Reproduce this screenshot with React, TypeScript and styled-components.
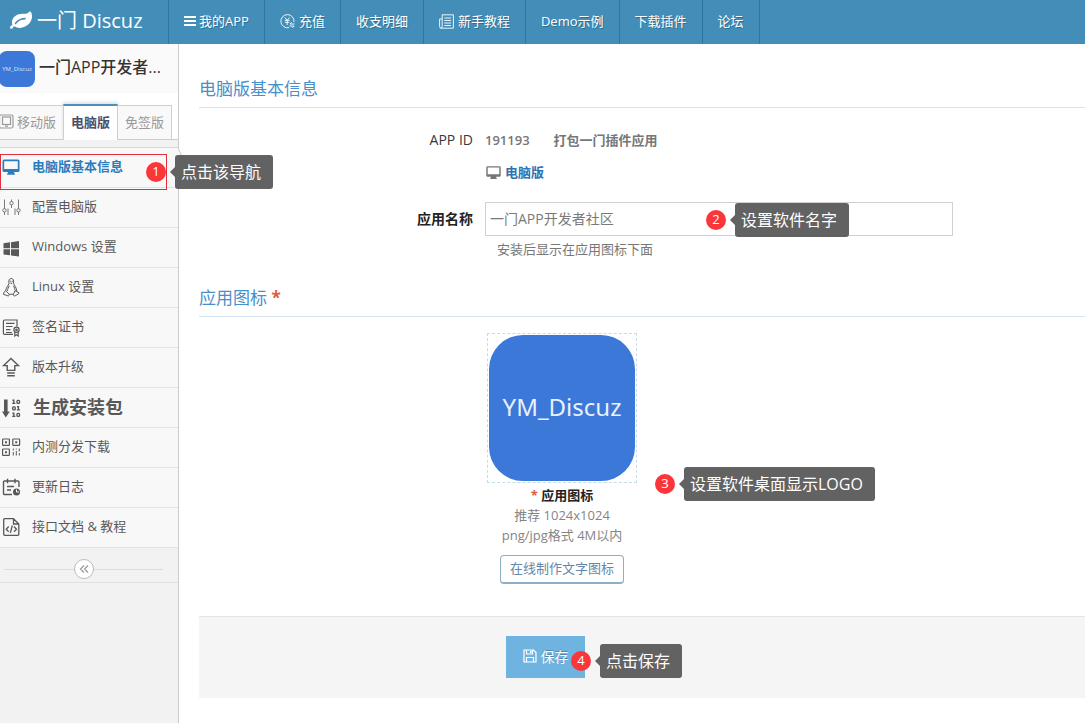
import React from "react";
import styled, { createGlobalStyle, css } from "styled-components";

const GlobalStyle = createGlobalStyle`
  *, *::before, *::after { box-sizing: border-box; }
  body {
    margin: 0;
    background: #fff;
    color: #393939;
    font: 13px/20px "Open Sans", "Noto Sans CJK SC", sans-serif;
  }
  a { color: inherit; text-decoration: none; }
  h1, h2, p, ul { margin: 0; padding: 0; }
  ul { list-style: none; }
  svg { display: block; flex: none; }
  button, input { font-family: inherit; }
`;

const Page = styled.div`
  display: flex;
  flex-direction: column;
  min-height: 100vh;
`;

/* ---------- top bar ---------- */

const TopBar = styled.header`
  display: flex;
  height: 44px;
  background: #438eb9;
  color: #fff;
`;

const Brand = styled.a`
  display: flex;
  align-items: center;
  flex: none;
  width: 168px;
  padding: 0 0 2px 10px;
  gap: 5px;
  font-size: 20px;
  white-space: nowrap;
`;

const TopNav = styled.nav`
  display: flex;
  border-left: 1px solid #2c76a0;
`;

const TopLink = styled.a`
  display: flex;
  align-items: center;
  gap: ${(p: { $gap?: number }) => p.$gap ?? 3}px;
  padding: 0 15px 2px;
  border-right: 1px solid #2c76a0;
  white-space: nowrap;
  text-shadow: 1px 1px 0 rgba(0, 0, 0, 0.25);
`;

/* ---------- sidebar ---------- */

const Body = styled.div`
  display: flex;
  flex: 1;
`;

const Sidebar = styled.aside`
  flex: none;
  width: 179px;
  background: #f2f2f2;
  border-right: 1px solid #ccc;
`;

const AppHead = styled.div`
  display: flex;
  align-items: center;
  height: 49px;
  padding-right: 8px;
  gap: 4px;
  background: #fafafa;
`;

const AppThumb = styled.span`
  display: flex;
  align-items: center;
  justify-content: center;
  flex: none;
  width: 36px;
  height: 36px;
  margin-left: -1px;
  border-radius: 8px;
  background: #3c78d8;
  color: #dbe6f8;
  font-size: 6px;
`;

const AppName = styled.h1`
  overflow: hidden;
  padding-bottom: 4px;
  font-size: 16px;
  font-weight: 500;
  line-height: 24px;
  color: #333;
  white-space: nowrap;
`;

const Tabs = styled.nav`
  display: flex;
  align-items: flex-end;
  height: 47px;
  background: #fff;
  border-bottom: 1px solid #c5d0dc;
`;

const Tab = styled.a<{ $active?: boolean }>`
  display: flex;
  align-items: center;
  gap: 3px;
  height: 34px;
  padding: 0 7px 2px;
  background: #f9f9f9;
  border: 1px solid #c5d0dc;
  border-width: 1px 1px 0 0;
  color: #999;
  white-space: nowrap;
  &:first-child { padding-left: 0; }
  ${(p) =>
    p.$active &&
    css`
      height: 36px;
      margin: 0 0 -1px -1px;
      padding-bottom: 3px;
      background: #fff;
      border-top: 2px solid #4c8fbd;
      border-left: 1px solid #c5d0dc;
      color: #4c4f6a;
      font-weight: 600;
      box-shadow: 0 -2px 3px rgba(0, 0, 0, 0.12);
    `}
`;

const Menu = styled.ul`
  margin-top: 7px;
  border-top: 1px solid #c9dbe6;
`;

const MenuItem = styled.li`
  position: relative;
  height: 40px;
  border-bottom: 1px solid #e2e2e2;
  background: #f8f8f8;
`;

const MenuLink = styled.a<{ $active?: boolean; $strong?: boolean }>`
  display: flex;
  align-items: center;
  height: 39px;
  gap: ${(p) => (p.$strong ? 12 : 11)}px;
  padding-bottom: ${(p) => (p.$strong ? 0 : 2)}px;
  color: ${(p) => (p.$active ? "#2b7dbc" : "#585858")};
  padding-left: 1px;
  font-size: ${(p) => (p.$strong ? 18 : 13)}px;
  font-weight: ${(p) => (p.$active ? 600 : p.$strong ? 700 : 400)};
  white-space: nowrap;
`;

const MenuText = styled.span`
  padding-bottom: 2px;
`;

const ActiveNotch = styled.svg`
  position: absolute;
  left: 177px;
  top: -1px;
`;

const ActiveFrame = styled.span`
  position: absolute;
  left: 0;
  right: 11px;
  top: 6px;
  height: 36px;
  border: 1px solid #e0303a;
  z-index: 1;
  pointer-events: none;
`;

const CollapseBar = styled.div`
  display: flex;
  align-items: center;
  justify-content: center;
  height: 35px;
  padding: 8px 15px 0 4px;
  border-bottom: 1px solid #e0e0e0;
  &::before, &::after {
    content: "";
    flex: 1;
    border-top: 1px solid #dcdcdc;
  }
`;

const CollapseButton = styled.button`
  display: flex;
  align-items: center;
  justify-content: center;
  width: 20px;
  height: 20px;
  padding: 0;
  border: 1px solid #bbb;
  border-radius: 50%;
  background: #fff;
  color: #999;
`;

/* ---------- main form ---------- */

const Main = styled.main`
  flex: 1;
  min-width: 0;
  padding: 33px 0 24px 20px;
`;

const SectionTitle = styled.h2`
  padding-bottom: 6px;
  border-bottom: 1px solid #d5e3ef;
  color: #478fca;
  font-size: 17px;
  font-weight: 400;
  line-height: 24px;
`;

const Star = styled.span`
  color: #dd5a43;
  font-weight: 700;
`;

const FieldRow = styled.div`
  display: grid;
  grid-template-columns: 274px minmax(0, 1fr);
  column-gap: 12px;
  align-items: center;
`;

const InfoBlock = styled.div`
  display: grid;
  gap: 12px;
  padding: 22px 0 20px;
`;

const InfoLabel = styled.span`
  text-align: right;
  font-size: 14px;
`;

const InfoValue = styled.div`
  display: flex;
  gap: 24px;
  color: #777;
  font-weight: 600;
`;

const Platform = styled.a`
  grid-column: 2;
  display: flex;
  align-items: center;
  gap: 3px;
  color: #777;
  font-weight: 600;
`;

const PlatformName = styled.span`
  color: #3071b0;
`;

const NameLabel = styled.label`
  text-align: right;
  font-size: 14px;
  font-weight: 600;
  color: #222;
`;

const NameField = styled.div`
  position: relative;
  max-width: 468px;
`;

const TextInput = styled.input`
  display: block;
  width: 100%;
  height: 34px;
  padding: 0 4px 2px;
  border: 1px solid #d0d0d0;
  border-radius: 0;
  background: #fff;
  color: #7a7a7a;
  font-size: 14px;
`;

const Help = styled.p`
  grid-column: 2;
  padding: 3px 0 27px 12px;
  color: #777;
`;

const UploadRow = styled.div`
  display: grid;
  grid-template-columns: 286px minmax(0, 1fr);
  padding: 16px 0 32px;
`;

const UploadCard = styled.div`
  grid-column: 2;
  position: relative;
  display: flex;
  flex-direction: column;
  align-items: center;
  width: 150px;
  margin-left: 2px;
  color: #858585;
`;

const IconFrame = styled.div`
  width: 150px;
  height: 150px;
  margin-bottom: 2px;
  padding: 1px;
  border: 1px dashed #c4dcea;
`;

const IconPreview = styled.div`
  display: flex;
  align-items: center;
  justify-content: center;
  height: 146px;
  padding-bottom: 2px;
  border-radius: 34px;
  background: #3c78d8;
  color: #e9f0fb;
  font: 24px/32px "Noto Sans", sans-serif;
`;

const UploadName = styled.strong`
  color: #222;
  font-weight: 600;
`;

const OutlineButton = styled.button`
  height: 29px;
  margin-top: 10px;
  padding: 0 9px 4px;
  border: 1px solid #8ab0c8;
  border-bottom-width: 2px;
  border-radius: 4px;
  background: #fff;
  color: #6688a6;
  font-size: 13px;
  white-space: nowrap;
`;

const Actions = styled.div`
  padding: 19px 20px 20px 307px;
  border-top: 1px solid #e5e5e5;
  background: #f5f5f5;
`;

const SaveSlot = styled.div`
  position: relative;
  width: 79px;
`;

const SaveButton = styled.button`
  display: flex;
  align-items: center;
  justify-content: center;
  gap: 4px;
  width: 100%;
  height: 42px;
  padding: 0 0 2px;
  border: 0;
  background: #6fb3e0;
  color: #fff;
  font-size: 14px;
  text-shadow: 0 -1px 0 rgba(0, 0, 0, 0.25);
`;

/* ---------- numbered guide callouts ---------- */

const Callout = styled.div<{ $left: number; $top: number }>`
  position: absolute;
  left: ${(p) => p.$left}px;
  top: ${(p) => p.$top}px;
  z-index: 2;
  display: flex;
  align-items: center;
  gap: 9px;
  color: #fff;
  font-weight: 400;
  white-space: nowrap;
`;

const StepDot = styled.span`
  width: 20px;
  height: 20px;
  border-radius: 50%;
  background: #fb363b;
  text-align: center;
  font-size: 13px;
  line-height: 19px;
`;

const Bubble = styled.span`
  position: relative;
  height: 34px;
  padding: 0 12px 0 6px;
  border-radius: 3px;
  background: rgba(85, 85, 85, 0.92);
  font-size: 16px;
  line-height: 34px;
  &::before {
    content: "";
    position: absolute;
    left: -5px;
    top: 12px;
    border: 5px solid transparent;
    border-left-width: 0;
    border-right-color: rgba(85, 85, 85, 0.92);
  }
`;

function Step({ n, text, left, top }: { n: number; text: string; left: number; top: number }) {
  return (
    <Callout $left={left} $top={top}>
      <StepDot>{n}</StepDot>
      <Bubble>{text}</Bubble>
    </Callout>
  );
}

/* ---------- icons ---------- */

const LineIcon = ({ children, size = 20 }: { children: React.ReactNode; size?: number }) => (
  <svg width={size} height={size} viewBox="0 0 20 20" fill="none" stroke="currentColor" strokeWidth="1.2" aria-hidden="true">
    {children}
  </svg>
);

const LeafIcon = () => (
  <svg width="22" height="22" viewBox="0 0 1792 1792" fill="currentColor" aria-hidden="true">
    <path d="M1280 704q0-26-19-45t-45-19q-172 0-318 49.5t-259.5 134-235.5 219.5q-19 21-19 45 0 26 19 45t45 19q24 0 45-19 27-24 74-71t67-66q137-124 268.5-176t313.5-52q26 0 45-19t19-45zm512-198q0 95-20 193-46 224-184.5 383t-357.5 268q-214 108-438 108-148 0-286-47-15-5-88-42t-96-37q-16 0-39.5 32t-45 70-52.5 70-60 32q-43 0-63.5-17.5t-45.5-59.5q-2-4-6-11t-5.5-10-3-9.5-1.5-13.5q0-35 31-73.5t68-65.5 68-56 31-48q0-4-14-38t-16-44q-9-51-9-104 0-115 43.5-220t119-184.5 170.5-139 204-95.5q55-18 145-25.5t179.5-9 178.5-6 163.5-24 113.5-56.5l29.5-29.5 29.5-28 27-20 36.5-16 43.5-4.5q39 0 70.5 46t47.5 112 24 124 8 96z" />
  </svg>
);

const BarsIcon = () => (
  <svg width="12" height="12" viewBox="0 0 12 12" fill="currentColor" aria-hidden="true">
    <path d="M0 1h12v2H0zM0 5h12v2H0zM0 9h12v2H0z" />
  </svg>
);

const RechargeIcon = () => (
  <svg width="15" height="15" viewBox="0 0 15 15" fill="none" stroke="currentColor" strokeWidth=".9" aria-hidden="true">
    <path d="M9 13.6A6.6 6.6 0 1 1 14 8M4.8 3.4 7.2 6.4l2.4-3M4.8 6.4h4.8M4.8 8.4h4.4M7.2 6.4v4.6M14.5 10H10l1.7-1.8M9.5 12h4.6l-1.7 1.8" />
  </svg>
);

const NewsIcon = () => (
  <svg width="15" height="15" viewBox="0 0 15 15" fill="none" stroke="currentColor" strokeWidth=".9" aria-hidden="true">
    <path d="M3 .8h11.4v13.4H2.2A1.6 1.6 0 0 1 .6 12.6V5H3M3.2.8v11.8a1.4 1.4 0 0 1-1.400 1.500M5.300 4h6.800M5.300 6.500h6.800M5.300 9h6.800M5.300 11.500h6.800" />
  </svg>
);

const TabletIcon = () => (
  <svg width="14" height="15" viewBox="0 0 14 15" fill="none" stroke="currentColor" strokeWidth="1.2" aria-hidden="true">
    <rect x="-.5" y="1" width="13.5" height="13" rx="1.5" />
    <rect x="2.5" y="3" width="8" height="7.5" />
    <path d="M5 12.2h3" />
  </svg>
);

const DesktopIcon = ({ size }: { size: number }) => (
  <svg width={size} height={size} viewBox="0 0 20 20" fill="currentColor" aria-hidden="true">
    <path fillRule="evenodd" d="M3 2.500h14A1.500 1.500 0 0 1 18.500 4v9.500A1.500 1.500 0 0 1 17 15h-4l1 2.700H6L7 15H3a1.500 1.500 0 0 1-1.500-1.500V4A1.500 1.500 0 0 1 3 2.500zm.200 1.700v7.800h13.600V4.200z" />
  </svg>
);

const SlidersIcon = () => (
  <LineIcon>
    <g strokeWidth=".8">
      <path d="M3.500 2.500v9M3.500 15v3M7 11.500V18M10.500 2.500v2M10.500 8v3M14 11.500V18M17.500 2.500v9M17.500 15v3" />
      <circle cx="3.500" cy="13.300" r="1.700" />
      <circle cx="10.500" cy="6.200" r="1.700" />
      <circle cx="17.500" cy="13.300" r="1.700" />
    </g>
  </LineIcon>
);

const WindowsIcon = () => (
  <svg width="20" height="20" viewBox="0 0 20 20" fill="currentColor" aria-hidden="true">
    <path d="M2.500 6.200 9 5.300v6H2.500zM10 5.200 18 4v7.300h-8zM2.500 12.300H9v6l-6.500-.9zM10 12.300h8v7.300l-8-1.200z" />
  </svg>
);

const PenguinIcon = () => (
  <LineIcon>
    <g strokeWidth="1" strokeLinejoin="round">
      <path d="M7.900 6.500V4.200c0-1.700.9-2.700 2.300-2.700s2.400 1 2.400 2.700v2.100c.4 2 2.900 3.800 3.200 7.700M7.900 6.500C7.500 8.500 5 10.500 4.600 14M8.200 8.800c-.7 1.700-1.700 3-1.700 5M12.400 8.800c.9 1.700 1.800 3 1.600 4.800M8.300 17.300h3.900" />
      <path d="M4.600 13.800 3 15.300l-.6 2 4.500 1.500c1.200.2 1.700-.9 1.200-1.800zM14 13.800l4 2-.4 1-3.400 2c-1.200.4-2-.4-1.900-1.400z" />
    </g>
    <path d="M8.900 5.700h2.800l-1.400 1.500z" fill="currentColor" stroke="none" />
    <path d="M9.200 3.800v1M11.300 3.800v1" />
  </LineIcon>
);

const CertificateIcon = () => (
  <LineIcon>
    <path d="M12 17.400H3.500A1.200 1.200 0 0 1 2.400 16.200V4.200A1.200 1.200 0 0 1 3.500 3H16v6.500M5 6.300h8.500M5 9.500h6.500M5 12.700h4.500M5 15.500h6" />
    <circle cx="15.500" cy="12.800" r="2.600" />
    <circle cx="15.500" cy="12.800" r=".8" />
    <path d="M13.800 15v4l1.700-1.200 1.700 1.200v-4" />
  </LineIcon>
);

const UpgradeIcon = () => (
  <LineIcon>
    <path strokeWidth="1.400" d="M10 1.400 2.600 8.600h3.600v4.800h7.600V8.600h3.600zM6.200 16h7.600M6.200 18.700h7.600" />
  </LineIcon>
);

const BinaryIcon = () => (
  <svg width="20" height="20" viewBox="0 0 20 20" fill="none" stroke="currentColor" aria-hidden="true">
    <path d="M3 1.500h3.600v12h2.200L4.800 19.500 1 13.500h2z" fill="currentColor" stroke="none" />
    <g strokeWidth="1.400">
      <path d="M11.400 2.300h1.400v3.500M11.200 5.400h3.200M11.400 15.300h1.400v3.500M11.200 18.400h3.200M16 8.800h1.400v3.500M15.800 11.900H19" />
      <rect x="16" y="2.400" width="2.500" height="3" rx=".8" />
      <rect x="11.700" y="8.900" width="2.500" height="3" rx=".8" />
      <rect x="16" y="15.400" width="2.500" height="3" rx=".8" />
    </g>
  </svg>
);

const QrIcon = () => (
  <LineIcon>
    <rect x="1.600" y="2" width="6.800" height="6.400" rx=".6" />
    <rect x="11.800" y="2" width="6.800" height="6.400" rx=".6" />
    <rect x="1.600" y="12" width="6.800" height="6.400" rx=".6" />
    <path d="M4 5.200h2M14.200 5.200h2M4 15.200h2" strokeWidth="2" />
    <path d="M12.300 11.500v2M12.300 15v3.500M15.300 11.500v1M15.300 14v4.500M18.300 11.500v3M18.300 16v2.500" strokeWidth="1" />
  </LineIcon>
);

const CalendarIcon = () => (
  <LineIcon>
    <path strokeWidth="1.400" d="M11 17.500H3.500a1 1 0 0 1-1-1V5a1 1 0 0 1 1-1H17a1 1 0 0 1 1 1v5M6.500 1.800v4.500M14 1.800v4.500M6 9.500h7M6 13h4" />
    <circle cx="15.500" cy="15" r="3.500" fill="currentColor" stroke="none" />
    <path d="M15.500 12.500V15H18" stroke="#f8f8f8" strokeWidth="1" />
  </LineIcon>
);

const CodeFileIcon = () => (
  <LineIcon>
    <path strokeWidth="1.300" d="M12.500 1.700H3.700a1 1 0 0 0-1 1v14.600a1 1 0 0 0 1 1h13.100a1 1 0 0 0 1-1V7zM12.500 1.700V7h5.300M7.700 9.500 5.200 12.200l2.500 2.600M13 9.500l2.500 2.700-2.500 2.600M11.300 8.500l-1.900 7.400" />
  </LineIcon>
);

const SaveIcon = () => (
  <svg width="14" height="14" viewBox="0 0 14 14" fill="none" stroke="currentColor" strokeWidth="1.200" aria-hidden="true">
    <path d="M1 1h9.500L13 3.500V13H1zM3.500 1v4h6V1M3.500 13V8.500h7V13" />
    <path d="M7.800 2v2" strokeWidth="1.600" />
  </svg>
);

const DoubleLeftIcon = () => (
  <svg width="10" height="10" viewBox="0 0 10 10" fill="none" stroke="currentColor" strokeWidth="1.200" aria-hidden="true">
    <path d="M5 1.500 1.500 5 5 8.500M9 1.500 5.500 5 9 8.500" />
  </svg>
);

/* ---------- data ---------- */

const topLinks: { text: string; icon?: React.ReactNode; gap?: number }[] = [
  { text: "我的APP", icon: <BarsIcon /> },
  { text: "充值", icon: <RechargeIcon />, gap: 4 },
  { text: "收支明细" },
  { text: "新手教程", icon: <NewsIcon />, gap: 4 },
  { text: "Demo示例" },
  { text: "下载插件" },
  { text: "论坛" },
];

const menu: { text: string; icon: React.ReactNode; active?: boolean; strong?: boolean }[] = [
  { text: "电脑版基本信息", icon: <DesktopIcon size={20} />, active: true },
  { text: "配置电脑版", icon: <SlidersIcon /> },
  { text: "Windows 设置", icon: <WindowsIcon /> },
  { text: "Linux 设置", icon: <PenguinIcon /> },
  { text: "签名证书", icon: <CertificateIcon /> },
  { text: "版本升级", icon: <UpgradeIcon /> },
  { text: "生成安装包", icon: <BinaryIcon />, strong: true },
  { text: "内测分发下载", icon: <QrIcon /> },
  { text: "更新日志", icon: <CalendarIcon /> },
  { text: "接口文档 & 教程", icon: <CodeFileIcon /> },
];

export default function App() {
  return (
    <Page>
      <GlobalStyle />
      <TopBar>
        <Brand href="#">
          <LeafIcon />
          <span>一门 Discuz</span>
        </Brand>
        <TopNav>
          {topLinks.map((l) => (
            <TopLink key={l.text} href="#" $gap={l.gap}>
              {l.icon}
              <span>{l.text}</span>
            </TopLink>
          ))}
        </TopNav>
      </TopBar>

      <Body>
        <Sidebar>
          <AppHead>
            <AppThumb>YM_Discuz</AppThumb>
            <AppName>一门APP开发者...</AppName>
          </AppHead>
          <Tabs>
            <Tab href="#">
              <TabletIcon />
              移动版
            </Tab>
            <Tab href="#" $active>
              电脑版
            </Tab>
            <Tab href="#">免签版</Tab>
          </Tabs>
          <Menu>
            {menu.map((m) => (
              <MenuItem key={m.text}>
                <MenuLink href="#" $active={m.active} $strong={m.strong}>
                  {m.icon}
                  <MenuText>{m.text}</MenuText>
                </MenuLink>
                {m.active && (
                  <>
                    <ActiveNotch width="11" height="41" viewBox="0 0 11 41" fill="#f8f8f8" stroke="#b9cfdf">
                      <path d="M1 .5 9.500 20.500 1 40.500" />
                    </ActiveNotch>
                    <ActiveFrame />
                    <Step n={1} text="点击该导航" left={146} top={7} />
                  </>
                )}
              </MenuItem>
            ))}
          </Menu>
          <CollapseBar>
            <CollapseButton type="button" aria-label="收起菜单">
              <DoubleLeftIcon />
            </CollapseButton>
          </CollapseBar>
        </Sidebar>

        <Main>
          <SectionTitle>电脑版基本信息</SectionTitle>
          <InfoBlock>
            <FieldRow>
              <InfoLabel>APP ID</InfoLabel>
              <InfoValue>
                <span>191193</span>
                <span>打包一门插件应用</span>
              </InfoValue>
            </FieldRow>
            <FieldRow>
              <Platform href="#">
                <DesktopIcon size={17} />
                <PlatformName>电脑版</PlatformName>
              </Platform>
            </FieldRow>
          </InfoBlock>
          <FieldRow>
            <NameLabel htmlFor="app-name">应用名称</NameLabel>
            <NameField>
              <TextInput id="app-name" type="text" defaultValue="一门APP开发者社区" />
              <Step n={2} text="设置软件名字" left={221} top={1} />
            </NameField>
            <Help>安装后显示在应用图标下面</Help>
          </FieldRow>

          <SectionTitle>
            应用图标 <Star>*</Star>
          </SectionTitle>
          <UploadRow>
            <UploadCard>
              <IconFrame>
                <IconPreview>YM_Discuz</IconPreview>
              </IconFrame>
              <UploadName>
                <Star>*</Star> 应用图标
              </UploadName>
              <span>推荐 1024x1024</span>
              <span>png/jpg格式 4M以内</span>
              <OutlineButton type="button">在线制作文字图标</OutlineButton>
              <Step n={3} text="设置软件桌面显示LOGO" left={168} top={134} />
            </UploadCard>
          </UploadRow>

          <Actions>
            <SaveSlot>
              <SaveButton type="button">
                <SaveIcon />
                保存
              </SaveButton>
              <Step n={4} text="点击保存" left={65} top={8} />
            </SaveSlot>
          </Actions>
        </Main>
      </Body>
    </Page>
  );
}
